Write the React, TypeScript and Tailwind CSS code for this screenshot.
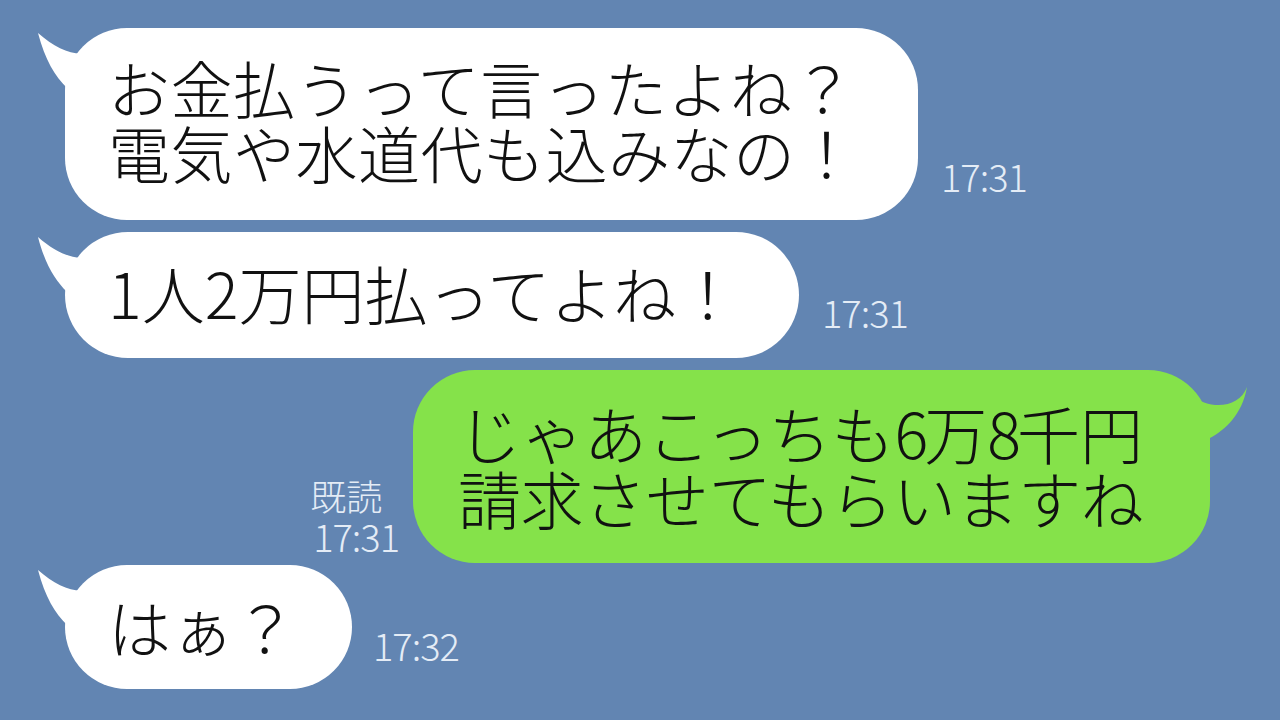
import React from "react";

const FONT = { fontFamily: '"Noto Sans CJK JP", "Noto Sans", sans-serif' };

function LeftTail() {
  return (
    <svg
      className="absolute left-[-30px] top-0"
      width="90"
      height="80"
      viewBox="0 0 90 80"
    >
      <path
        d="M3,5 C20,20 38,28 52,25 C64,22 72,14 80,4 L80,66 L34,66 L32,60 C20,48 10,32 3,5 Z"
        fill="#ffffff"
      />
    </svg>
  );
}

function RightTail() {
  return (
    <svg
      className="absolute right-[-40px] top-0"
      width="60"
      height="80"
      viewBox="0 0 60 80"
    >
      <path
        d="M57,17 C52,30 40,36 25,35 C15,34 8,30 0,25 L0,80 L20,80 L20,68 C35,60 52,45 57,17 Z"
        fill="#85e24a"
      />
    </svg>
  );
}

function Time({ t, mb }: { t: string; mb: string }) {
  return (
    <div
      className={`text-[38px] font-light leading-none tracking-[-1px] text-[#e4ecf6] ${mb}`}
      style={FONT}
    >
      {t}
    </div>
  );
}

export default function App() {
  return (
    <div
      className="w-[1280px] h-[720px] overflow-hidden bg-[#6285b2] flex flex-col pt-[28px] text-[#111111] font-light"
      style={FONT}
    >
      {/* Row 1 */}
      <div className="flex items-end pl-[65px]">
        <div className="relative w-[853px] h-[192px] bg-white rounded-[62px] pl-[43px] pt-[27px] text-[62px] tracking-[0.5px] leading-[65px] whitespace-nowrap">
          <LeftTail />
          <div className="relative">お金払うって言ったよね？</div>
          <div className="relative">電気や水道代も込みなの！</div>
        </div>
        <div className="ml-[23px]">
          <Time t="17:31" mb="mb-[25px]" />
        </div>
      </div>

      {/* Row 2 */}
      <div className="flex items-end pl-[65px] mt-[12px]">
        <div className="relative w-[734px] h-[126px] bg-white rounded-[63px] pl-[43px] pt-[27px] text-[63px] leading-[65px] whitespace-nowrap">
          <LeftTail />
          <div className="relative">1人2万円払ってよね！</div>
        </div>
        <div className="ml-[23px]">
          <Time t="17:31" mb="mb-[27px]" />
        </div>
      </div>

      {/* Row 3 */}
      <div className="flex items-end justify-end pr-[70px] mt-[12px]">
        <div
          className="flex flex-col items-start mr-[14px] mb-[8px] text-[#e4ecf6]"
          style={FONT}
        >
          <div className="text-[36px] leading-[44px] -ml-[3px]">既読</div>
          <div className="text-[38px] leading-none tracking-[-1px]">17:31</div>
        </div>
        <div className="relative w-[797px] h-[193px] bg-[#85e24a] rounded-[62px] pl-[45px] pt-[29px] text-[63px] leading-[65px] whitespace-nowrap">
          <RightTail />
          <div className="relative">
            じゃあこっちも<span className="tracking-[-4px]">6</span>万
            <span className="tracking-[-4px]">8</span>千円
          </div>
          <div className="relative tracking-[-0.4px]">請求させてもらいますね</div>
        </div>
      </div>

      {/* Row 4 */}
      <div className="flex items-end pl-[65px] mt-[2px]">
        <div className="relative w-[287px] h-[124px] bg-white rounded-[62px] pl-[43px] pt-[28px] text-[63px] leading-[65px] whitespace-nowrap">
          <LeftTail />
          <div className="relative">はぁ？</div>
        </div>
        <div className="ml-[21px]">
          <Time t="17:32" mb="mb-[25px]" />
        </div>
      </div>
    </div>
  );
}
